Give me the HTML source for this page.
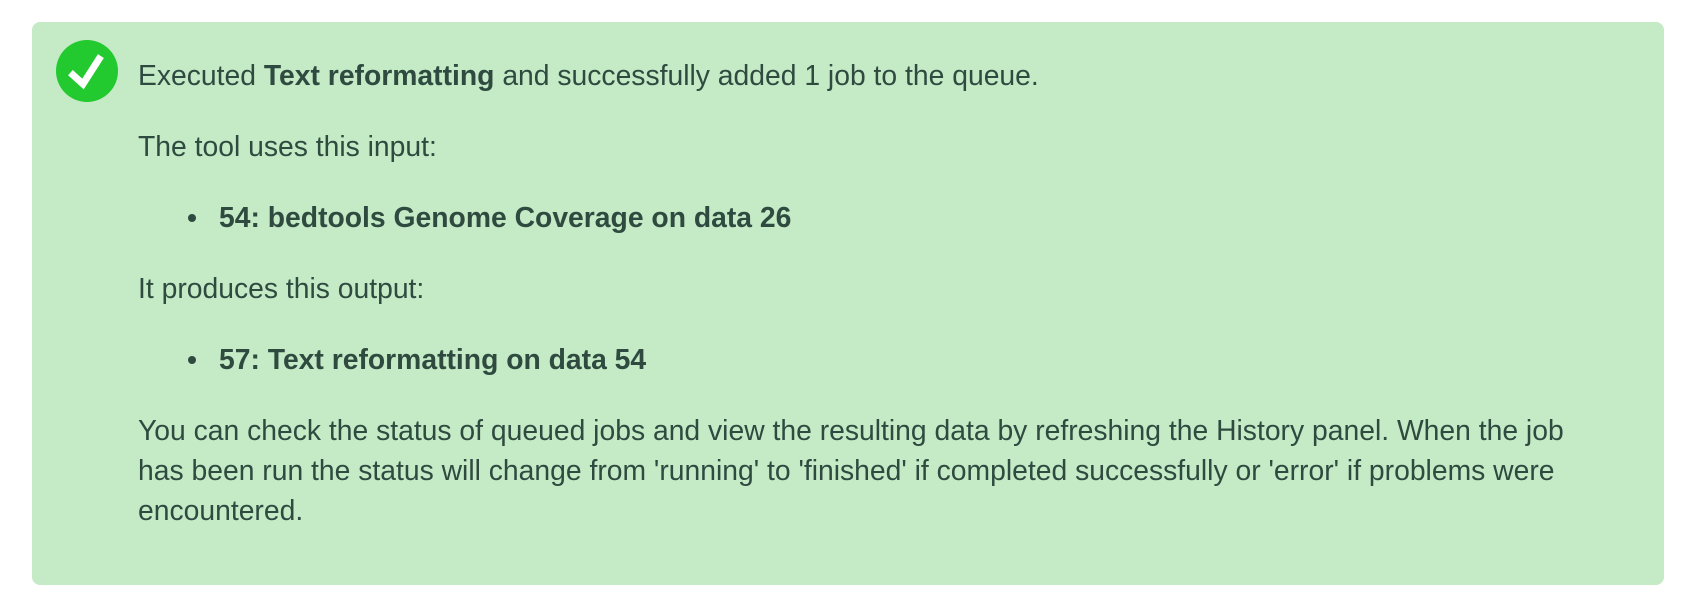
<!DOCTYPE html>
<html><head><meta charset="utf-8"><style>
html,body{margin:0;padding:0;background:#fff;width:1682px;height:612px;overflow:hidden}
.box{position:absolute;left:32px;top:22px;width:1632px;height:563px;background:#c4eac6;border-radius:8px}
.ic{position:absolute;left:55px;top:39px}
.c{position:absolute;left:138px;top:55px;width:1462px;font-family:"Liberation Sans",sans-serif;font-size:28.3px;line-height:40px;color:#2f4b40}
p{margin:0 0 31px}
ul{margin:0 0 31px;padding-left:81px;list-style:none}
li{font-weight:bold;position:relative}
li:before{content:"";position:absolute;left:-31px;top:17px;width:8px;height:8px;border-radius:50%;background:#2f4b40}
</style></head><body>
<div class="box"></div>
<svg class="ic" width="64" height="64" viewBox="0 0 64 64"><circle cx="32" cy="32" r="31" fill="#22c92f"/><path d="M18 36 L28 45 L44 20" stroke="#fff" stroke-width="7" fill="none" stroke-linecap="square" stroke-linejoin="miter"/></svg>
<div class="c">
<p>Executed <b>Text reformatting</b> and successfully added 1 job to the queue.</p>
<p>The tool uses this input:</p>
<ul><li>54: bedtools Genome Coverage on data 26</li></ul>
<p>It produces this output:</p>
<ul><li>57: Text reformatting on data 54</li></ul>
<p>You can check the status of queued jobs and view the resulting data by refreshing the History panel. When the job has been run the status will change from 'running' to 'finished' if completed successfully or 'error' if problems were encountered.</p>
</div>
</body></html>
